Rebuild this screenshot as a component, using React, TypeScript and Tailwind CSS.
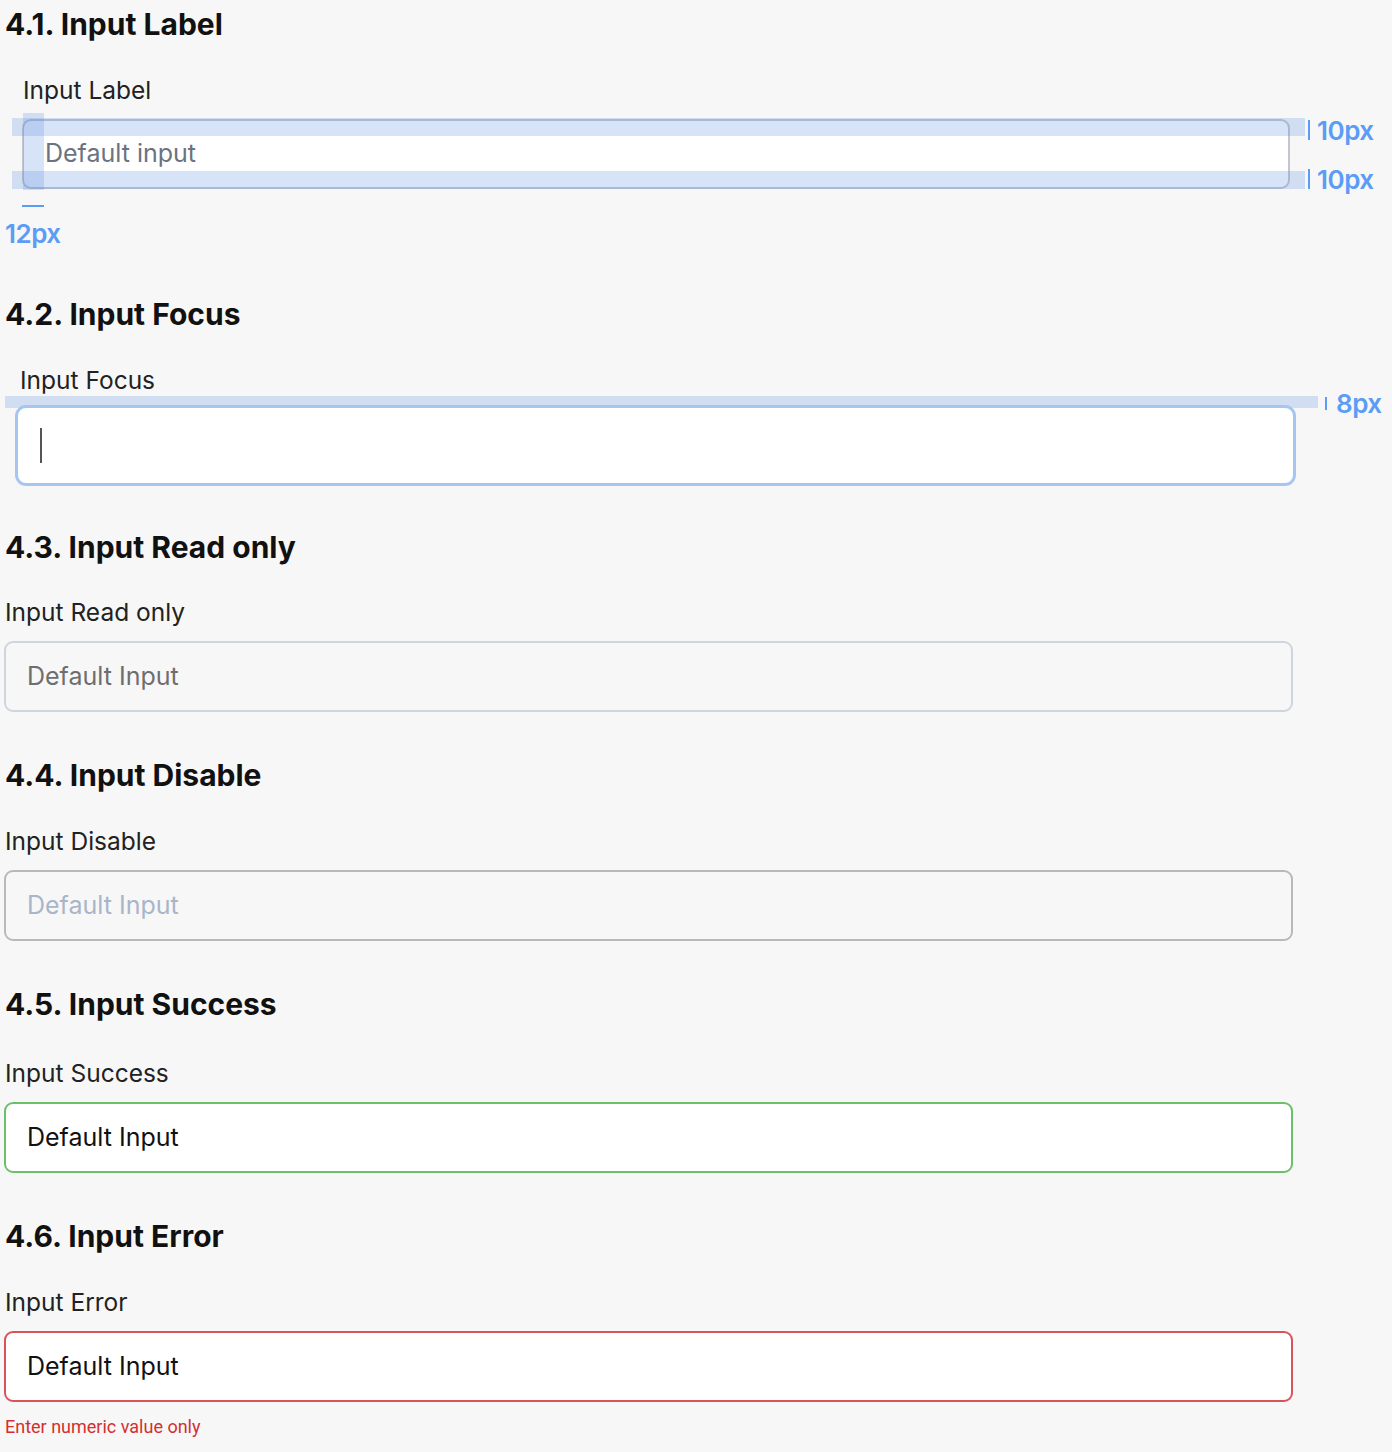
import React from "react";

const font = { fontFamily: "Inter, 'Noto Sans', sans-serif" };

function Heading({ children }: { children: React.ReactNode }) {
  return (
    <div className="h-[48px] flex items-center pl-[5px] text-[30px] font-bold text-[#111111]">{children}</div>
  );
}

function Label({ children, className = "" }: { children: React.ReactNode; className?: string }) {
  return <div className={`h-[36px] flex items-center text-[24.5px] text-[#222222] ${className}`}>{children}</div>;
}

function Note({ children, className = "" }: { children: React.ReactNode; className?: string }) {
  return (
    <div className={`h-[30px] flex items-center text-[26px] font-semibold text-[#5b9cf5] tracking-[-0.5px] ${className}`}>
      {children}
    </div>
  );
}

function Field({ text, box, textColor }: { text: string; box: string; textColor: string }) {
  return (
    <div className={`ml-[4px] w-[1289px] h-[71px] rounded-[9px] border-2 flex items-center pl-[21px] text-[25px] ${box} ${textColor}`}>
      {text}
    </div>
  );
}

export default function App() {
  return (
    <div className="w-[1392px] h-[1452px] bg-[#f7f7f7] overflow-hidden flex flex-col" style={font}>
      {/* 4.1 */}
      <section className="flex flex-col">
        <Heading>4.1. Input Label</Heading>
        <div className="flex flex-col gap-[11px] mt-[24px]">
          <Label className="pl-[23px] text-[23px]">Input Label</Label>
          <div className="relative ml-[22px] w-[1268px] h-[70px]">
            <div className="h-full rounded-[9px] border-2 border-[#c3c6cc] bg-white flex items-center pl-[21px] text-[25px] text-[#6b7280]">
              Default input
            </div>
            {/* spacing overlays */}
            <div className="absolute left-[-10px] right-[-15px] top-[-1px] h-[18px] bg-[#5f8fe0]/25" />
            <div className="absolute left-[-10px] right-[-15px] bottom-[0px] h-[18px] bg-[#5f8fe0]/25" />
            <div className="absolute left-[1px] w-[21px] top-[-6px] bottom-[-1px] bg-[#5f8fe0]/25" />
            <div className="absolute left-[1286px] top-[-4px] flex items-center gap-[7px]">
              <div className="w-[2px] h-[20px] bg-[#5b9cf5]" />
              <Note>10px</Note>
            </div>
            <div className="absolute left-[1286px] top-[45px] flex items-center gap-[7px]">
              <div className="w-[2px] h-[20px] bg-[#5b9cf5]" />
              <Note>10px</Note>
            </div>
          </div>
        </div>
        <div className="flex flex-col gap-[8px] mt-[16px]">
          <div className="ml-[22px] w-[22px] h-[2px] bg-[#5b9cf5]" />
          <Note className="pl-[5px] h-[36px]">12px</Note>
        </div>
      </section>

      {/* 4.2 */}
      <section className="flex flex-col mt-[39px]">
        <Heading>4.2. Input Focus</Heading>
        <div className="flex flex-col gap-[7px] mt-[24px]">
          <Label className="pl-[20px]">Input Focus</Label>
          <div className="relative ml-[15px] w-[1281px] h-[81px]">
            <div className="absolute left-[-10px] right-[-22px] top-[-9px] h-[12px] bg-[#5f8fe0]/25" />
            <div className="relative h-full rounded-[11px] border-[3px] border-[#a6c6f0] bg-white flex items-center pl-[22px]">
              <div className="w-[2px] h-[35px] bg-[#555555]" />
            </div>
            <div className="absolute left-[1310px] top-[-17px] flex items-center gap-[9px]">
              <div className="w-[2px] h-[13px] bg-[#5b9cf5]" />
              <Note>8px</Note>
            </div>
          </div>
        </div>
      </section>

      {/* 4.3 */}
      <section className="flex flex-col mt-[37px]">
        <Heading>4.3. Input Read only</Heading>
        <div className="flex flex-col gap-[11px] mt-[23px]">
          <Label className="pl-[5px]">Input Read only</Label>
          <Field text="Default Input" box="border-[#cfd5df] bg-[#f7f7f7]" textColor="text-[#6e6e6e]" />
        </div>
      </section>

      {/* 4.4 */}
      <section className="flex flex-col mt-[39px]">
        <Heading>4.4. Input Disable</Heading>
        <div className="flex flex-col gap-[11px] mt-[24px]">
          <Label className="pl-[5px]">Input Disable</Label>
          <Field text="Default Input" box="border-[#b9b9b9] bg-[#f7f7f7]" textColor="text-[#a9b5c8]" />
        </div>
      </section>

      {/* 4.5 */}
      <section className="flex flex-col mt-[39px]">
        <Heading>4.5. Input Success</Heading>
        <div className="flex flex-col gap-[11px] mt-[27px]">
          <Label className="pl-[5px]">Input Success</Label>
          <Field text="Default Input" box="border-[#6cc06c] bg-white" textColor="text-[#111111]" />
        </div>
      </section>

      {/* 4.6 */}
      <section className="flex flex-col mt-[39px]">
        <Heading>4.6. Input Error</Heading>
        <div className="flex flex-col gap-[11px] mt-[24px]">
          <Label className="pl-[5px]">Input Error</Label>
          <Field text="Default Input" box="border-[#d9535a] bg-white" textColor="text-[#111111]" />
        </div>
        <div
          className="mt-[12px] h-[24px] pl-[5px] flex items-center text-[18px] text-[#d32f2f]"
          style={{ fontFamily: "Roboto, 'Liberation Sans', sans-serif" }}
        >
          Enter numeric value only
        </div>
      </section>
    </div>
  );
}
